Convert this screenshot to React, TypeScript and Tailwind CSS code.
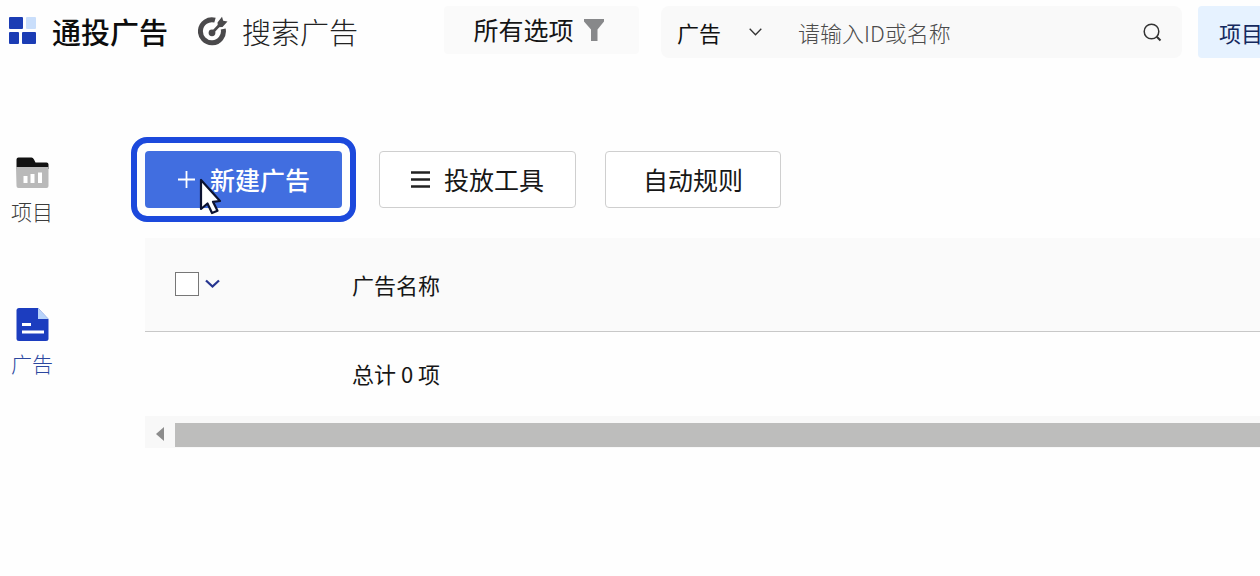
import type { ReactNode } from 'react';

interface SideItemProps {
    label: string;
    active?: boolean;
    children: ReactNode;
}

function GridLogo() {
    return (
        <svg width="28" height="28" viewBox="0 0 28 28" aria-hidden="true">
            <rect x="0" y="0" width="14" height="12" rx="1" fill="#1b3cb4" />
            <rect x="17" y="0" width="10" height="12" rx="1" fill="#c9defb" />
            <rect x="0" y="15" width="10" height="12" rx="1" fill="#1b3cb4" />
            <rect x="13" y="15" width="14" height="12" rx="1" fill="#1b3cb4" />
        </svg>
    );
}

function TargetIcon() {
    return (
        <svg width="30" height="30" viewBox="0 0 30 30" fill="none" aria-hidden="true">
            <path d="M17 4.200A11.500 11.500 0 1 0 25.200 13" stroke="#4a494b" strokeWidth="5" />
            <path d="M13.500 17.500L22 8.500" stroke="#4a494b" strokeWidth="2.600" />
            <circle cx="14" cy="16.800" r="3.400" fill="#4a494b" />
            <path d="M19.500 6.500l4.500-5.700 1.200 4 4.300.800-5 5.400-4.500.2z" fill="#4a494b" />
        </svg>
    );
}

function FunnelIcon() {
    return (
        <svg width="20" height="23" viewBox="0 0 20 23" aria-hidden="true">
            <path d="M0 0h20v2.500l-6.500 8V22H7V10.500L0 2.500z" fill="#87888a" />
        </svg>
    );
}

function FolderIcon() {
    return (
        <svg width="33" height="33" viewBox="0 0 33 33" aria-hidden="true">
            <path d="M.5 13V3.500q0-2 2-2h13q1.500 0 2.500 2l1.500 3h11q2 0 2 2V13z" fill="#121212" />
            <path d="M0 11h32.500v19q0 2-2 2H2.500q-2 0-2-2z" fill="#b9b9b9" />
            <path d="M7.500 20h4v7h-4zM14.500 18h4v9h-4zM22 16.500h4V27h-4z" fill="#fff" />
        </svg>
    );
}

function DocIcon() {
    return (
        <svg width="33" height="33" viewBox="0 0 33 33" aria-hidden="true">
            <path d="M3 0h19l10.500 11v19.500q0 2.500-2.500 2.500H3q-2.500 0-2.500-2.500v-28Q.5 0 3 0z" fill="#1c3dbf" />
            <path d="M22 0l10.500 11H22z" fill="#b8d3fa" />
            <path d="M6 15h9v3H6zM6 22.500h22v3H6z" fill="#fff" />
        </svg>
    );
}

function SideItem({ label, active, children }: SideItemProps) {
    return (
        <a
            href="#"
            className={`flex flex-col items-center gap-[7px] text-[21px] leading-[30px] font-light ${active ? 'text-[#2b479f]' : 'text-[#3c3c3c]'}`}
        >
            {children}
            {label}
        </a>
    );
}

function Header() {
    return (
        <header className="flex h-16 items-start pt-1.5 pl-[9px] whitespace-nowrap">
            <nav className="flex shrink-0 items-center gap-[30px] text-[29px] leading-[50px]">
                <a href="#" className="flex items-center gap-[15px] font-medium text-[#0d0d0d]">
                    <GridLogo />
                    通投广告
                </a>
                <a href="#" className="flex items-center gap-[14px] font-light text-[#222]">
                    <TargetIcon />
                    搜索广告
                </a>
            </nav>

            <button className="ml-[86px] flex h-12 w-[195px] shrink-0 items-center justify-center gap-[10px] rounded-sm bg-[#fafafa] pr-1.5 text-[25px] text-[#151515]">
                所有选项
                <FunnelIcon />
            </button>

            <form className="ml-[22px] flex h-[52px] w-[521px] shrink-0 items-center rounded-lg bg-[#f9f9f9] text-[22px]">
                <div className="relative w-[125px]">
                    <select aria-label="类型" className="h-[50px] w-full appearance-none bg-transparent pl-4 text-[#111] outline-none">
                        <option>广告</option>
                    </select>
                    <svg className="pointer-events-none absolute top-1/2 right-6 -translate-y-1/2" width="13" height="8" viewBox="0 0 13 8" fill="none" aria-hidden="true">
                        <path d="M.7.8l5.800 6 5.800-6" stroke="#333" strokeWidth="1.3" />
                    </svg>
                </div>
                <input
                    type="text"
                    aria-label="搜索"
                    placeholder="请输入ID或名称"
                    className="h-[50px] min-w-0 flex-1 bg-transparent pl-3 font-light outline-none placeholder:text-[#4b4b4b]"
                />
                <button type="button" aria-label="搜索" className="mr-5">
                    <svg width="19" height="19" viewBox="0 0 19 19" fill="none" stroke="#333" aria-hidden="true">
                        <circle cx="8.500" cy="8.500" r="7.300" strokeWidth="1.500" />
                        <path d="M13.800 13.800l3.700 3.700" strokeWidth="2" />
                    </svg>
                </button>
            </form>

            <button className="ml-4 h-[52px] shrink-0 rounded bg-[#e6f2ff] px-[21px] text-[22px] text-[#15295e]">项目</button>
        </header>
    );
}

function Toolbar() {
    return (
        <div className="flex gap-[29px] text-[25px] text-[#171717]">
            <div className="relative mr-2">
                <button className="flex h-[57px] w-[197px] items-center justify-center gap-[14px] rounded bg-[#416ee0] font-medium text-white">
                    <svg width="19" height="19" viewBox="0 0 19 19" aria-hidden="true">
                        <path d="M9.500 1v17M1 9.500h17" stroke="#fff" strokeWidth="1.800" />
                    </svg>
                    新建广告
                </button>
                <div className="pointer-events-none absolute -inset-[14px] rounded-2xl border-[6px] border-[#1c49dc]" />
                {/* mouse pointer resting on the button */}
                <svg className="pointer-events-none absolute top-[27px] left-[54px]" width="23" height="38" viewBox="0 0 23 38" aria-hidden="true">
                    <path d="M2 2v29l6.500-5.500L13 35l5.500-2.200-4.500-9 7-.8z" fill="#fff" stroke="#0c1230" strokeWidth="2.200" strokeLinejoin="round" />
                </svg>
            </div>
            <button className="flex h-[57px] w-[197px] items-center justify-center gap-[14px] rounded border border-[#cfcfcf] bg-white">
                <svg width="19" height="17" viewBox="0 0 19 17" aria-hidden="true">
                    <path d="M0 1.500h19M0 8.500h19M0 15.500h19" stroke="#222" strokeWidth="2.400" />
                </svg>
                投放工具
            </button>
            <button className="h-[57px] w-44 rounded-sm border border-[#cfcfcf] bg-white">自动规则</button>
        </div>
    );
}

function AdTable() {
    return (
        <div className="mt-[30px]">
            <table className="w-full table-fixed text-left text-[22px] text-[#161616]">
                <thead>
                    <tr className="h-[93px] border-b border-[#c8c8c8] bg-[#fafafa]">
                        <th className="w-[207px] pl-[30px]">
                            <div className="flex items-center gap-[6px]">
                                <input type="checkbox" aria-label="全选" className="size-6 appearance-none border border-[#777] bg-white" />
                                <button aria-label="展开">
                                    <svg className="block" width="15" height="10" viewBox="0 0 15 10" fill="none" aria-hidden="true">
                                        <path d="M1 1.500l6.500 6 6.500-6" stroke="#263590" strokeWidth="2.300" />
                                    </svg>
                                </button>
                            </div>
                        </th>
                        <th className="font-normal">广告名称</th>
                    </tr>
                </thead>
                <tbody>
                    <tr className="h-[85px]">
                        <td />
                        <td>总计 0 项</td>
                    </tr>
                </tbody>
            </table>
            <div className="flex h-8 items-end bg-[#f8f8f8]">
                <button aria-label="向左滚动" className="flex h-8 w-[30px] items-center justify-center pt-1">
                    <svg width="8" height="14" viewBox="0 0 8 14" aria-hidden="true">
                        <path d="M8 0v14L0 7z" fill="#8c8c8c" />
                    </svg>
                </button>
                <div className="mb-px h-6 flex-1 bg-[#bdbdbc]" />
            </div>
        </div>
    );
}

export default function App() {
    return (
        <div className="min-h-screen overflow-hidden bg-[#fefefe] font-['Noto_Sans_CJK_SC',sans-serif]">
            <Header />
            <div className="flex">
                <aside className="flex w-[145px] shrink-0 flex-col items-start gap-[82px] pt-[92px] pl-[11px]">
                    <SideItem label="项目">
                        <FolderIcon />
                    </SideItem>
                    <SideItem label="广告" active>
                        <DocIcon />
                    </SideItem>
                </aside>
                <main className="min-w-0 flex-1 pt-[87px]">
                    <Toolbar />
                    <AdTable />
                </main>
            </div>
        </div>
    );
}
